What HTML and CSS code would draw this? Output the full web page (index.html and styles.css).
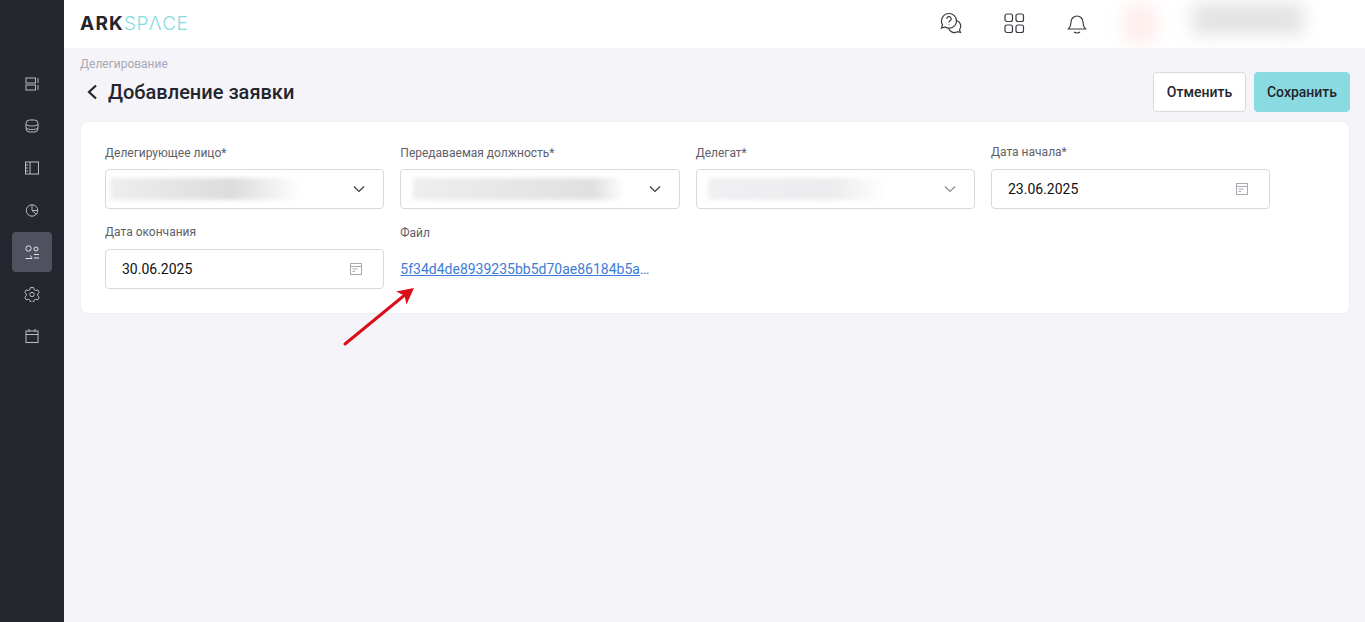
FILE: index.html
```html
<!DOCTYPE html>
<html lang="ru">
<head>
  <meta charset="UTF-8" />
  <title>Добавление заявки</title>
  <link rel="stylesheet" href="styles.css">
</head>
<body>

  <!-- Sidebar -->
  <aside class="sidebar">
    <a class="side-item"><svg viewBox="0 0 16 16"><rect x="2" y="2" width="9.5" height="5"/><rect x="2" y="9" width="9.5" height="5"/><path d="M14 2v5M14 9v5"/></svg></a>
    <a class="side-item"><svg viewBox="0 0 16 16"><rect x="2" y="2" width="12" height="12" rx="3.5"/><path d="M2 6.5c2 2 10 2 12 0M2 10c2 2 10 2 12 0"/></svg></a>
    <a class="side-item"><svg viewBox="0 0 16 16"><rect x="1.5" y="2" width="13" height="12"/><path d="M6 2v12M1.5 5h2.500M1.500 8h2.500M1.500 11h2.500"/></svg></a>
    <a class="side-item"><svg viewBox="0 0 16 16"><circle cx="8" cy="8.5" r="5.7"/><path d="M8 2.8v5.700l4 3.500M8 8.500h5.700"/></svg></a>
    <a class="side-item active"><svg viewBox="0 0 16 16"><circle cx="4.500" cy="4.500" r="2.700"/><circle cx="12" cy="5" r="2"/><path d="M1.500 14.500h6.500c-.3-1.500-1-2.500-2-3M10 10.500h5M10 14h5"/></svg></a>
    <a class="side-item"><svg viewBox="0 0 16 16"><path d="M6.500 1.500h3l.5 2 1.800 1 2-.6 1.400 2.600-1.500 1.500 0 1.800 1.500 1.400-1.400 2.600-2-.6-1.800 1-.5 1.900h-3l-.5-1.900-1.800-1-2 .6-1.400-2.600 1.500-1.400 0-1.800-1.500-1.500 1.400-2.600 2 .6 1.800-1z"/><circle cx="8" cy="8.500" r="2.200"/></svg></a>
    <a class="side-item"><svg viewBox="0 0 16 16"><rect x="2" y="3" width="12" height="11.500"/><path d="M2 6.500h12M5 1v3M11 1v3"/></svg></a>
  </aside>

  <div class="main">

    <!-- Header -->
    <header class="topbar">
      <div class="logo">ARK<span>SP&#923;CE</span></div>
      <div class="top-icons">
        <svg class="top-icon" viewBox="0 0 24 24"><path d="M10 2.500a7.500 7.500 0 0 0-6.500 11.200L2.500 17l3.500-1a7.500 7.500 0 0 0 4 1.200 7.400 7.400 0 0 0 7.500-7.300 7.400 7.400 0 0 0-7.500-7.400z"/><path d="M17.500 9.500a6 6 0 0 1 3 9.500l1 2.500-3.200-.8a6 6 0 0 1-8.800-3.500"/><path d="M7.800 7.800a2.200 2.200 0 1 1 3.200 2c-.8.400-1 .9-1 1.600M10 13.500v.5"/></svg>
        <svg class="top-icon" viewBox="0 0 24 24"><rect x="3" y="3" width="7.500" height="7.500" rx="2"/><rect x="14" y="3" width="7.500" height="7.500" rx="2"/><rect x="3" y="14" width="7.500" height="7.500" rx="2"/><rect x="14" y="14" width="7.500" height="7.500" rx="2"/></svg>
        <svg class="top-icon" viewBox="0 0 24 24"><path d="M3.500 18c1.500-1.500 2.500-3 2.500-7a6 6 0 0 1 12 0c0 4 1 5.500 2.500 7z"/><path d="M9 21c1.500 1.300 4.500 1.300 6 0"/></svg>
      </div>
      <div class="user-blur">
        <div class="avatar-blur"></div>
        <div class="name-blur"></div>
      </div>
    </header>

    <main class="content">
      <div class="crumb">Делегирование</div>
      <div class="page-head">
        <h1 class="title">
          <svg class="back" viewBox="0 0 12 16"><path d="M10 1.500 3 8l7 6.500"/></svg>
          Добавление заявки
        </h1>
        <div class="actions">
          <button class="btn">Отменить</button>
          <button class="btn btn-save">Сохранить</button>
        </div>
      </div>

      <!-- Form -->
      <section class="card">
        <div class="form-grid">
          <div class="field">
            <label>Делегирующее лицо*</label>
            <div class="input">
              <div class="blur blur-1"></div>
              <svg class="chevron" viewBox="0 0 12 8"><path d="M1 1.500 6 6.500l5-5"/></svg>
            </div>
          </div>
          <div class="field">
            <label>Передаваемая должность*</label>
            <div class="input">
              <div class="blur blur-2"></div>
              <svg class="chevron" viewBox="0 0 12 8"><path d="M1 1.500 6 6.500l5-5"/></svg>
            </div>
          </div>
          <div class="field">
            <label>Делегат*</label>
            <div class="input">
              <div class="blur blur-3"></div>
              <svg class="chevron light" viewBox="0 0 12 8"><path d="M1 1.500 6 6.500l5-5"/></svg>
            </div>
          </div>
          <div class="field field-date">
            <label>Дата начала*</label>
            <div class="input">
              <span class="date">23.06.2025</span>
              <svg class="cal" viewBox="0 0 14 14"><rect x="1.500" y="1.500" width="11" height="11"/><path d="M1.500 4.500h11M3.500 7h5M3.500 9.500h2.500"/></svg>
            </div>
          </div>
          <div class="field field-date">
            <label>Дата окончания</label>
            <div class="input">
              <span class="date">30.06.2025</span>
              <svg class="cal" viewBox="0 0 14 14"><rect x="1.500" y="1.500" width="11" height="11"/><path d="M1.500 4.500h11M3.500 7h5M3.500 9.500h2.500"/></svg>
            </div>
          </div>
          <div class="field">
            <label>Файл</label>
            <div class="file-row">
              <a class="file-link" href="#">5f34d4de8939235bb5d70ae86184b5a4c1e7.pdf</a>
            </div>
          </div>
        </div>
      </section>
    </main>
  </div>

  <!-- Red annotation arrow -->
  <svg class="arrow" viewBox="0 0 80 66"><path class="arrow-line" d="M5 61 66 11"/><path class="arrow-head" d="M74 5 56 8.500 64.500 12.500 66.500 21.500z"/></svg>

</body>
</html>
```

FILE: styles.css
```css
/* General Styles */
* {
  box-sizing: border-box;
}
html, body {
  height: 100%;
}
body {
  margin: 0;
  display: flex;
  overflow: hidden;
  font-family: Roboto, "Liberation Sans", sans-serif;
  background: #f4f4f9;
  color: #24252c;
}

/* Sidebar */
.sidebar {
  width: 64px;
  flex-shrink: 0;
  background: #26272e;
  padding-top: 64px;
  display: flex;
  flex-direction: column;
  align-items: center;
  gap: 2px;
}
.side-item {
  width: 40px;
  height: 40px;
  border-radius: 4px;
  display: flex;
  align-items: center;
  justify-content: center;
}
.side-item.active {
  background: #50515e;
}
.side-item svg {
  width: 16px;
  height: 16px;
  fill: none;
  stroke: #b9bac2;
  stroke-width: 1;
}
.side-item.active svg {
  stroke: #e6e6ea;
}

/* Header */
.main {
  flex: 1;
  min-width: 0;
}
.topbar {
  height: 48px;
  background: #fff;
  display: flex;
  align-items: center;
  padding-left: 16px;
  overflow: hidden;
}
.logo {
  font-family: Inter, sans-serif;
  font-weight: 700;
  font-size: 19px;
  letter-spacing: 1.2px;
  color: #24252c;
  width: 859px;
  margin-top: -2px;
}
.logo span {
  font-weight: 300;
  color: #88dbe0;
  letter-spacing: 0.5px;
}
.top-icons {
  display: flex;
  gap: 39px;
  margin-top: -3px;
}
.top-icon {
  width: 24px;
  height: 24px;
  fill: none;
  stroke: #3a3b42;
  stroke-width: 1.2;
}
.user-blur {
  display: flex;
  margin-left: 39px;
  height: 48px;
  align-items: center;
}
.avatar-blur {
  width: 32px;
  height: 40px;
  margin-left: -4px;
  background: #ffecec;
  filter: blur(9px);
}
.name-blur {
  width: 112px;
  height: 30px;
  margin-left: 36px;
  margin-top: -10px;
  background: #e2e2e2;
  filter: blur(9px);
}

/* Page head */
.content {
  padding: 9px 15px 0 16px;
}
.crumb {
  font-size: 12px;
  line-height: 14px;
  color: #a8a9b5;
}
.page-head {
  display: flex;
  justify-content: space-between;
  height: 49px;
  margin-top: 1px;
}
.title {
  margin: 6px 0 0;
  display: flex;
  align-items: center;
  height: 28px;
  font-size: 20px;
  font-weight: 500;
  color: #24252c;
}
.back {
  width: 12px;
  height: 16px;
  margin: 0 10px 0 6px;
  fill: none;
  stroke: #24252c;
  stroke-width: 2.2;
}
.actions {
  display: flex;
  gap: 8px;
  height: 40px;
}
.btn {
  width: 93px;
  height: 40px;
  border: 1px solid #d8d8e0;
  border-radius: 4px;
  background: #fff;
  font-family: inherit;
  font-size: 14px;
  font-weight: 500;
  color: #24252c;
}
.btn-save {
  width: 96px;
  background: #8adae1;
  border-color: #8adae1;
}

/* Form */
.card {
  background: #fff;
  border: 1px solid #f0f0f4;
  border-radius: 8px;
  padding: 24px;
  height: 193px;
}
.form-grid {
  display: grid;
  grid-template-columns: repeat(4, 279.33px);
  column-gap: 16px;
  row-gap: 17px;
}
.field label {
  display: block;
  font-size: 12px;
  line-height: 14px;
  color: #5f6068;
  margin-bottom: 9px;
}
.input {
  height: 40px;
  background: #fff;
  border: 1px solid #d8d8e0;
  border-radius: 4px;
  display: flex;
  align-items: center;
  padding: 0 16px;
  justify-content: space-between;
}
.blur {
  height: 22px;
  filter: blur(2px);
}
.blur-1 {
  width: 190px;
  margin-left: -12px;
  background: linear-gradient(90deg, #eeeeee, #dcdcdc 65%, #fff);
}
.blur-2 {
  width: 212px;
  margin-left: -4px;
  background: linear-gradient(90deg, #eeeeee, #e0e0e0 85%, #fff);
}
.blur-3 {
  width: 178px;
  margin-left: -5px;
  background: linear-gradient(90deg, #f0f0f3, #ececee 70%, #fff);
}
.chevron {
  width: 12px;
  height: 8px;
  margin-right: 2px;
  fill: none;
  stroke: #3a3b42;
  stroke-width: 1.2;
}
.chevron.light {
  stroke: #8b8c95;
}
.date {
  font-size: 14px;
  color: #111;
}
.cal {
  width: 14px;
  height: 14px;
  margin-right: 4px;
  fill: none;
  stroke: #a8a9b0;
  stroke-width: 1;
}
.field-date label {
  margin-top: -1px;
  margin-bottom: 10px;
}
.file-row {
  height: 40px;
  display: flex;
  align-items: center;
}
.file-link {
  display: block;
  width: 250px;
  overflow: hidden;
  white-space: nowrap;
  text-overflow: ellipsis;
  font-size: 14px;
  color: #3e7bd6;
}

/* Annotation */
.arrow {
  position: absolute;
  left: 340px;
  top: 283px;
  width: 80px;
  height: 66px;
  fill: none;
}
.arrow-line {
  stroke: #d9101c;
  stroke-width: 3;
  stroke-linecap: round;
}
.arrow-head {
  fill: #d9101c;
}
```
